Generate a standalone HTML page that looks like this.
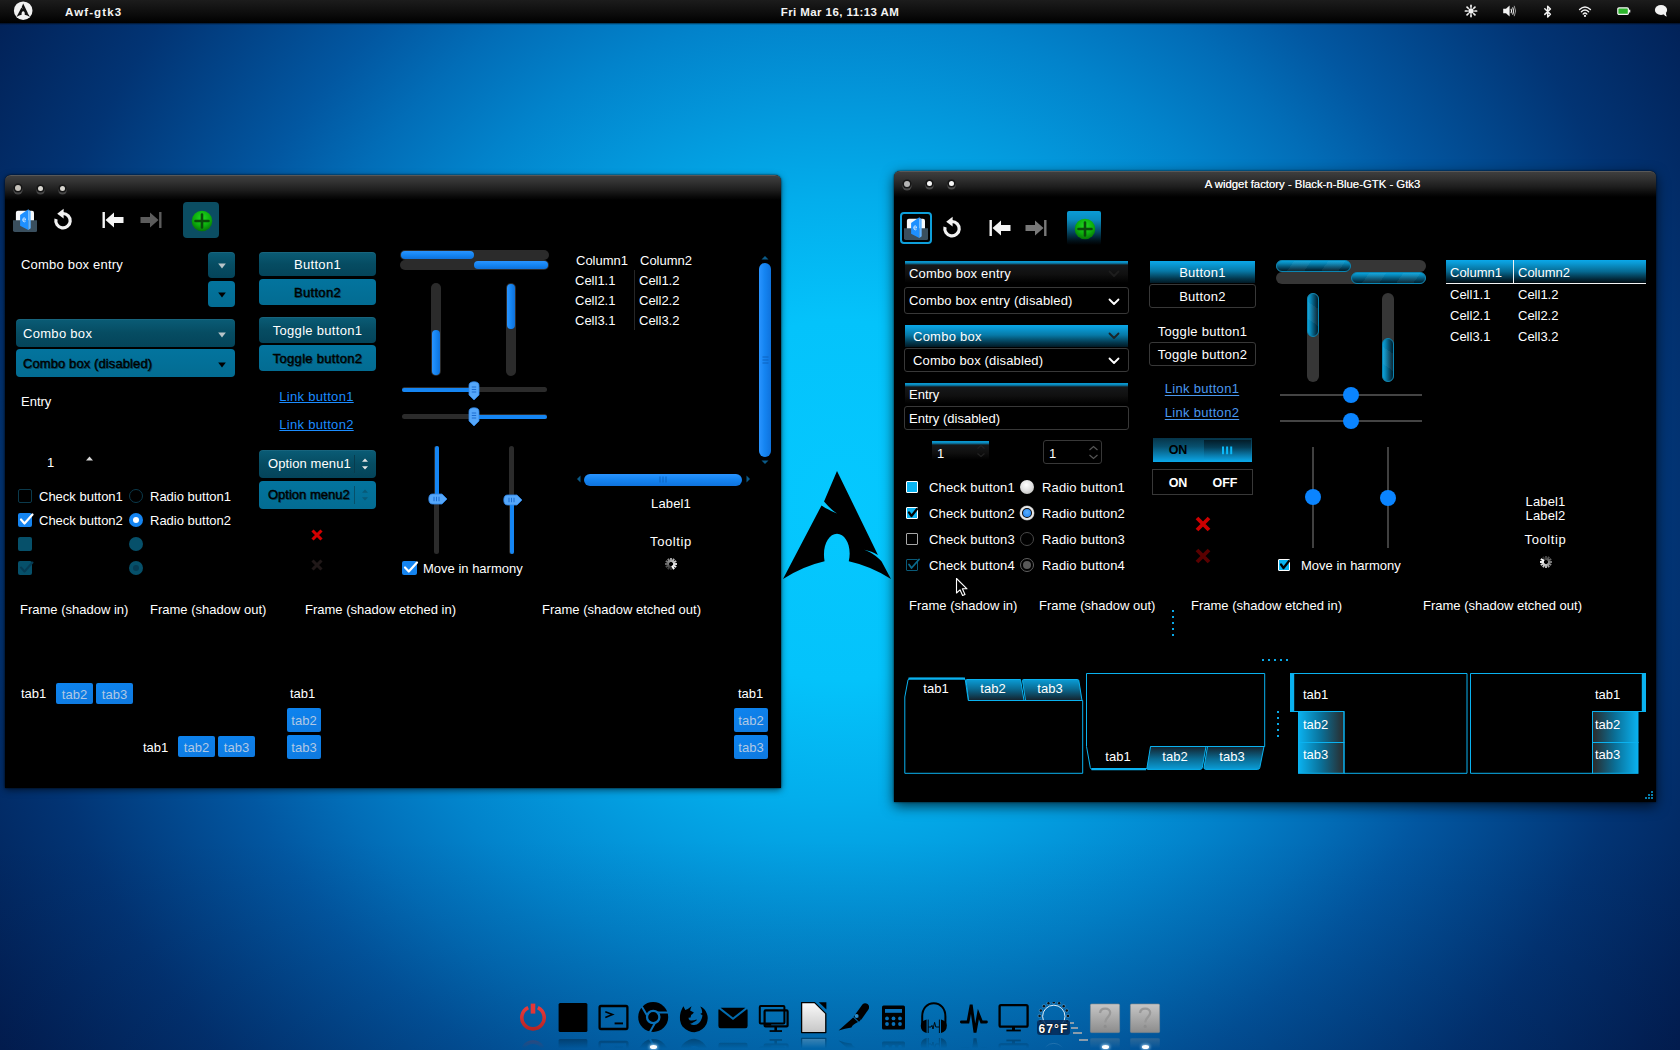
<!DOCTYPE html>
<html><head><meta charset="utf-8"><title>desktop</title>
<style>
html,body{margin:0;padding:0;}
body{width:1680px;height:1050px;overflow:hidden;position:relative;font-family:"Liberation Sans",sans-serif;
background:#0288d0;}
#bg{position:absolute;left:0;top:0;width:1680px;height:1050px;
background:linear-gradient(rgba(0,16,56,0) 80%,rgba(0,16,56,.16) 100%),radial-gradient(circle 1000px at 840px 500px,#05c8ff 0%,#04c3fb 18%,#03aeec 30%,#0397db 40%,#0283cb 49%,#026db7 58%,#0257a1 66%,#023474 83%,#021e52 100%);}
.a{position:absolute;box-sizing:border-box;}
.t{line-height:16px;height:16px;white-space:nowrap;}
</style></head><body><div id="bg"></div>

<div class="a " style="left:0px;top:0px;width:1680px;height:23px;background:linear-gradient(#1c1c1c,#0c0c0c 60%,#000);"></div>
<div class="a " style="left:0px;top:22px;width:1680px;height:3px;background:linear-gradient(rgba(0,0,0,.9),rgba(0,0,0,0));"></div>
<svg class="a" style="left:13px;top:1px;" width="20" height="20" viewBox="0 0 20 20"><circle cx="10.2" cy="9.7" r="9.3" fill="#f2f2f2"/><g transform="translate(3.5,2.5) scale(13.4)"><path d="M0.5,0 L0.38,0.283 C0.42,0.33 0.46,0.37 0.50,0.393 C0.45,0.372 0.40,0.348 0.357,0.3185 L0,1 Q0.19,0.88 0.385,0.836 C0.36,0.70 0.42,0.582 0.5,0.582 C0.58,0.582 0.64,0.70 0.609,0.836 Q0.81,0.88 1,1 L0.913,0.839 C0.87,0.79 0.81,0.75 0.753,0.73 C0.80,0.74 0.84,0.755 0.879,0.777Z" fill="#111"/></g></svg>
<div class="a t " style="left:65px;top:4px;color:#f4f4f4;font-size:11.5px;font-weight:bold;letter-spacing:1.1px;">Awf-gtk3</div>
<div class="a t " style="left:690px;width:300px;text-align:center;top:4px;color:#f4f4f4;font-size:11.5px;font-weight:bold;letter-spacing:0.42px;">Fri Mar 16, 11:13 AM</div>
<div class="a " style="left:5px;top:175px;width:776px;height:613px;background:#000;border-radius:6px 6px 0 0;box-shadow:0 2px 7px rgba(0,0,0,.55),0 0 2px rgba(0,0,0,.9);"></div>
<div class="a " style="left:5px;top:175px;width:776px;height:25px;background:linear-gradient(#3e3e3e 0%,#323232 25%,#1e1e1e 58%,#080808 88%,#000 100%);border-radius:6px 6px 0 0;border-top:1px solid #585858;"></div>
<div class="a" style="left:14.8px;top:184.8px;width:6.4px;height:6.4px;border-radius:50%;background:#c6c2ba;box-shadow:0 0 0 1.6px #161616,0 2px 0 1.6px rgba(255,255,255,.22);"></div>
<div class="a" style="left:37.5px;top:185.5px;width:5.0px;height:5.0px;border-radius:50%;background:#d8d6d0;box-shadow:0 0 0 1.6px #161616,0 2px 0 1.6px rgba(255,255,255,.22);"></div>
<div class="a" style="left:59.5px;top:185.5px;width:5.0px;height:5.0px;border-radius:50%;background:#d8d6d0;box-shadow:0 0 0 1.6px #161616,0 2px 0 1.6px rgba(255,255,255,.22);"></div>
<svg class="a" style="left:13px;top:208px;" width="24.4" height="24" viewBox="0 0 24.4 24">
<path d="M2.9 4.7 Q2.9 2.7 4.9 2.7 H19 Q21 2.7 21 4.7 V14 H2.9Z" fill="#f6f8fa"/>
<path d="M0 12.2 H24.3 V22.2 Q24.3 23.9 22.6 23.9 H1.7 Q0 23.9 0 22.2Z" fill="#3a4f5e"/>
<path d="M7.1 7 L15.3 1.3 V22 L7.1 17.7Z" fill="#1e90ff"/>
<path d="M15.3 1.3 L17.7 3.4 V20.3 L15.3 22Z" fill="#62b4ff"/>
<path d="M9.8 11.9 H12.6 Q12.4 9.8 11.1 9.8 Q9.7 9.9 9.8 11.9 Q9.9 13.8 11.3 13.8 Q12 13.8 12.5 13.4" stroke="#d8ecff" stroke-width="0.9" fill="none"/>
</svg>
<svg class="a" style="left:52px;top:208px;" width="22" height="24" viewBox="0 0 22 24">
<path d="M11 5.5 A7.2 7.2 0 1 1 4 11" fill="none" stroke="#f2f2f2" stroke-width="3.2"/>
<path d="M11.6 0.8 L11.6 10.6 L5.2 5.7Z" fill="#f2f2f2"/>
</svg>
<svg class="a" style="left:101px;top:211px;" width="24" height="18" viewBox="0 0 24 18">
<rect x="1.5" y="1" width="2.4" height="16" fill="#f4f4f4"/>
<path d="M4.5 9 L13 1.5 V6 H22.5 V12 H13 V16.5Z" fill="#f4f4f4"/>
</svg>
<svg class="a" style="left:139px;top:211px;" width="24" height="18" viewBox="0 0 24 18">
<rect x="20.1" y="1" width="2.4" height="16" fill="#5c5c5c"/>
<path d="M19.5 9 L11 1.5 V6 H1.5 V12 H11 V16.5Z" fill="#5c5c5c"/>
</svg>
<div class="a " style="left:183px;top:202px;width:36px;height:36px;background:#0b4d62;border-radius:4px;"></div>
<svg class="a" style="left:190.6px;top:209.6px;" width="22" height="22" viewBox="0 0 22 22">
<defs><radialGradient id="gp201" cx="50%" cy="35%" r="65%"><stop offset="0" stop-color="#22d822"/><stop offset="0.6" stop-color="#0cae0c"/><stop offset="1" stop-color="#067406"/></radialGradient></defs>
<circle cx="11" cy="11" r="10.3" fill="url(#gp201)"/>
<path d="M11 4.5 V17.5 M4.5 11 H17.5" stroke="#0a4a0a" stroke-width="2.6" stroke-linecap="round"/>
</svg>
<div class="a t " style="left:21px;top:257px;color:#fff;font-size:13px;letter-spacing:.2px;">Combo box entry</div>
<div class="a " style="left:208px;top:251.5px;width:27px;height:26.0px;background:linear-gradient(#0a5c76,#064c62 50%,#04445a);border-radius:4px;box-shadow:inset 0 1px 0 rgba(255,255,255,.06),0 1px 1px rgba(0,0,0,.5);"></div>
<svg class="a" style="left:217.5px;top:262.5px;" width="8" height="6" viewBox="0 0 8 6"><path d="M0.2 0.6 H7.8 L4 5.6Z" fill="#b8c4c8"/></svg>
<div class="a " style="left:208px;top:280.5px;width:27px;height:26.100000000000023px;background:linear-gradient(#03749e,#036c92);border-radius:4px;"></div>
<svg class="a" style="left:217.5px;top:292px;" width="8" height="6" viewBox="0 0 8 6"><path d="M0.2 0.6 H7.8 L4 5.6Z" fill="#000"/></svg>
<div class="a " style="left:16px;top:319.4px;width:219px;height:27.30000000000001px;background:linear-gradient(#0a5c76,#064c62 50%,#04445a);border-radius:4px;box-shadow:inset 0 1px 0 rgba(255,255,255,.06),0 1px 1px rgba(0,0,0,.5);"></div>
<div class="a t " style="left:23px;top:326px;color:#fff;font-size:13px;letter-spacing:.3px;">Combo box</div>
<svg class="a" style="left:218px;top:331.5px;" width="8" height="6" viewBox="0 0 8 6"><path d="M0.2 0.6 H7.8 L4 5.6Z" fill="#b8c4c8"/></svg>
<div class="a " style="left:16px;top:349.4px;width:219px;height:27.30000000000001px;background:linear-gradient(#03749e,#036c92);border-radius:4px;"></div>
<div class="a t " style="left:23px;top:356px;color:#000;font-size:13px;-webkit-text-stroke:.4px #000;text-shadow:1px 1px 0 #04485e;letter-spacing:.3px;letter-spacing:.1px;">Combo box (disabled)</div>
<svg class="a" style="left:218px;top:361.5px;" width="8" height="6" viewBox="0 0 8 6"><path d="M0.2 0.6 H7.8 L4 5.6Z" fill="#000"/></svg>
<div class="a t " style="left:21px;top:394px;color:#fff;font-size:13px;">Entry</div>
<div class="a t " style="left:47px;top:455px;color:#fff;font-size:13px;">1</div>
<svg class="a" style="left:86px;top:456px;" width="7" height="5" viewBox="0 0 7 5"><path d="M0 4.5 L3.5 0.5 L7 4.5Z" fill="#d8d8d8"/></svg>
<div class="a " style="left:259px;top:252px;width:117px;height:24px;background:linear-gradient(#0a5c76,#064c62 50%,#04445a);border-radius:4px;box-shadow:inset 0 1px 0 rgba(255,255,255,.06),0 1px 1px rgba(0,0,0,.5);"></div>
<div class="a t " style="left:167.5px;width:300px;text-align:center;top:257px;color:#fff;font-size:13px;letter-spacing:.3px;">Button1</div>
<div class="a " style="left:259px;top:279px;width:117px;height:26px;background:linear-gradient(#03749e,#036c92);border-radius:4px;"></div>
<div class="a t " style="left:167.5px;width:300px;text-align:center;top:285px;color:#000;font-size:13px;-webkit-text-stroke:.4px #000;text-shadow:1px 1px 0 #04485e;letter-spacing:.3px;">Button2</div>
<div class="a " style="left:259px;top:317px;width:117px;height:26px;background:linear-gradient(#0a5c76,#064c62 50%,#04445a);border-radius:4px;box-shadow:inset 0 1px 0 rgba(255,255,255,.06),0 1px 1px rgba(0,0,0,.5);"></div>
<div class="a t " style="left:167.5px;width:300px;text-align:center;top:323px;color:#fff;font-size:13px;letter-spacing:.3px;">Toggle button1</div>
<div class="a " style="left:259px;top:345px;width:117px;height:26px;background:linear-gradient(#03749e,#036c92);border-radius:4px;"></div>
<div class="a t " style="left:167.5px;width:300px;text-align:center;top:351px;color:#000;font-size:13px;-webkit-text-stroke:.4px #000;text-shadow:1px 1px 0 #04485e;letter-spacing:.3px;">Toggle button2</div>
<div class="a t " style="left:166.5px;width:300px;text-align:center;top:389px;color:#1b8cff;font-size:13px;text-decoration:underline;text-underline-offset:0.6px;letter-spacing:.3px;">Link button1</div>
<div class="a t " style="left:166.5px;width:300px;text-align:center;top:417px;color:#1b8cff;font-size:13px;text-decoration:underline;text-underline-offset:0.6px;letter-spacing:.3px;">Link button2</div>
<div class="a " style="left:259px;top:450px;width:117px;height:28px;background:linear-gradient(#0a5c76,#064c62 50%,#04445a);border-radius:4px;box-shadow:inset 0 1px 0 rgba(255,255,255,.06),0 1px 1px rgba(0,0,0,.5);"></div>
<div class="a t " style="left:268px;top:456px;color:#fff;font-size:13px;letter-spacing:.1px;">Option menu1</div>
<div class="a " style="left:354px;top:455px;width:1px;height:18px;background:#083c4e;"></div>
<svg class="a" style="left:360.5px;top:457px;" width="8" height="14" viewBox="0 0 8 14"><path d="M1 4.8 L4 1.4 L7 4.8Z M1 9.2 L4 12.6 L7 9.2Z" fill="#e4e4e4"/></svg>
<div class="a " style="left:259px;top:481px;width:117px;height:28px;background:linear-gradient(#03749e,#036c92);border-radius:4px;"></div>
<div class="a t " style="left:268px;top:487px;color:#000;font-size:13px;-webkit-text-stroke:.4px #000;text-shadow:1px 1px 0 #04485e;letter-spacing:.3px;letter-spacing:0;">Option menu2</div>
<div class="a " style="left:354px;top:486px;width:1px;height:18px;background:#07506a;"></div>
<svg class="a" style="left:360.5px;top:488px;" width="8" height="14" viewBox="0 0 8 14"><path d="M1 4.8 L4 1.4 L7 4.8Z M1 9.2 L4 12.6 L7 9.2Z" fill="#085a78"/></svg>
<div class="a " style="left:18px;top:489px;width:14px;height:14px;border:1.5px solid #0b3a4c;border-radius:2px;background:#000;"></div>
<div class="a t " style="left:39px;top:489px;color:#fff;font-size:13px;">Check button1</div>
<div class="a" style="left:129px;top:489px;width:14px;height:14px;border-radius:50%;border:1.5px solid #0b3a4c;background:#000;"></div>
<div class="a t " style="left:150px;top:489px;color:#fff;font-size:13px;">Radio button1</div>
<div class="a " style="left:18px;top:513px;width:14px;height:14px;background:#1584f0;border-radius:2px;"></div>
<svg class="a" style="left:18px;top:511px;" width="16" height="16" viewBox="0 0 16 16"><path d="M3 8.5 L6.5 12.5 L14.5 3.5" fill="none" stroke="#fff" stroke-width="2.2" stroke-linecap="round" stroke-linejoin="round"/></svg>
<div class="a t " style="left:39px;top:513px;color:#fff;font-size:13px;">Check button2</div>
<div class="a" style="left:129px;top:513px;width:14px;height:14px;border-radius:50%;background:#1584f0;"></div>
<div class="a" style="left:133px;top:517px;width:6px;height:6px;border-radius:50%;background:#fff;"></div>
<div class="a t " style="left:150px;top:513px;color:#fff;font-size:13px;">Radio button2</div>
<div class="a " style="left:18px;top:537px;width:14px;height:14px;background:#06506a;border-radius:2px;"></div>
<div class="a" style="left:129px;top:537px;width:14px;height:14px;border-radius:50%;background:#06506a;"></div>
<div class="a " style="left:18px;top:561px;width:14px;height:14px;background:#06506a;border-radius:2px;"></div>
<svg class="a" style="left:18px;top:559px;" width="16" height="16" viewBox="0 0 16 16"><path d="M3 8.5 L6.5 12.5 L14.5 3.5" fill="none" stroke="#063c54" stroke-width="2" stroke-linecap="round" stroke-linejoin="round"/></svg>
<div class="a" style="left:129px;top:561px;width:14px;height:14px;border-radius:50%;background:#06506a;"></div>
<div class="a" style="left:133px;top:565px;width:6px;height:6px;border-radius:50%;background:#063c54;"></div>
<svg class="a" style="left:311.2px;top:529.2px;" width="12" height="12" viewBox="0 0 12 12"><path d="M1.5 1.5 L10.5 10.5 M10.5 1.5 L1.5 10.5" stroke="#d40000" stroke-width="3.1" stroke-linecap="butt"/></svg>
<svg class="a" style="left:311.2px;top:559px;" width="12" height="12" viewBox="0 0 12 12"><path d="M1.5 1.5 L10.5 10.5 M10.5 1.5 L1.5 10.5" stroke="#201818" stroke-width="3.1" stroke-linecap="butt"/></svg>
<div class="a t " style="left:20px;top:602px;color:#fff;font-size:13px;">Frame (shadow in)</div>
<div class="a t " style="left:150px;top:602px;color:#fff;font-size:13px;">Frame (shadow out)</div>
<div class="a t " style="left:305px;top:602px;color:#fff;font-size:13px;">Frame (shadow etched in)</div>
<div class="a t " style="left:542px;top:602px;color:#fff;font-size:13px;">Frame (shadow etched out)</div>
<div class="a " style="left:400px;top:250px;width:149px;height:10px;background:#2b2b2b;border-radius:5px;"></div>
<div class="a " style="left:401px;top:251px;width:73px;height:8px;background:linear-gradient(#2a94ff,#1585f2 50%,#0f70d8);border-radius:4px;"></div>
<div class="a " style="left:400px;top:260px;width:149px;height:10px;background:#2b2b2b;border-radius:5px;"></div>
<div class="a " style="left:474px;top:261px;width:74px;height:8px;background:linear-gradient(#2a94ff,#1585f2 50%,#0f70d8);border-radius:4px;"></div>
<div class="a " style="left:431px;top:283px;width:10px;height:93px;background:#2b2b2b;border-radius:5px;"></div>
<div class="a " style="left:432px;top:330px;width:8px;height:45px;background:linear-gradient(90deg,#2a94ff,#1585f2 50%,#0f70d8);border-radius:4px;"></div>
<div class="a " style="left:506px;top:283px;width:10px;height:93px;background:#2b2b2b;border-radius:5px;"></div>
<div class="a " style="left:507px;top:284px;width:8px;height:45px;background:linear-gradient(90deg,#2a94ff,#1585f2 50%,#0f70d8);border-radius:4px;"></div>
<div class="a " style="left:402px;top:387px;width:145px;height:5px;background:#2b2b2b;border-radius:3px;"></div>
<div class="a " style="left:402px;top:387.5px;width:72px;height:4.0px;background:#1585f2;border-radius:2px;"></div>
<svg class="a" style="left:468px;top:380.5px;" width="12" height="20" viewBox="0 0 12 20"><path d="M1 4.5 Q1 0.8 6 0.8 Q11 0.8 11 4.5 V14 L6 19 L1 14Z" fill="#55a7fa" stroke="#2e86e8" stroke-width="0.8"/>
<path d="M3.8 6 H8.2 M3.8 8.5 H8.2 M3.8 11 H8.2" stroke="#1766cc" stroke-width="0.9"/></svg>
<div class="a " style="left:402px;top:414px;width:145px;height:5px;background:#2b2b2b;border-radius:3px;"></div>
<div class="a " style="left:474px;top:414.5px;width:73px;height:4.0px;background:#1585f2;border-radius:2px;"></div>
<svg class="a" style="left:468px;top:407.0px;" width="12" height="20" viewBox="0 0 12 20"><path d="M1 4.5 Q1 0.8 6 0.8 Q11 0.8 11 4.5 V14 L6 19 L1 14Z" fill="#55a7fa" stroke="#2e86e8" stroke-width="0.8"/>
<path d="M3.8 6 H8.2 M3.8 8.5 H8.2 M3.8 11 H8.2" stroke="#1766cc" stroke-width="0.9"/></svg>
<div class="a " style="left:434px;top:446px;width:5px;height:108px;background:#2b2b2b;border-radius:3px;"></div>
<div class="a " style="left:434.5px;top:446px;width:4.0px;height:53px;background:#1585f2;border-radius:2px;"></div>
<svg class="a" style="left:427.5px;top:492.5px;" width="20" height="12" viewBox="0 0 20 12"><path d="M4.5 1 Q0.8 1 0.8 6 Q0.8 11 4.5 11 H14 L19 6 L14 1Z" fill="#55a7fa" stroke="#2e86e8" stroke-width="0.8"/>
<path d="M6 3.8 V8.2 M8.5 3.8 V8.2 M11 3.8 V8.2" stroke="#1766cc" stroke-width="0.9"/></svg>
<div class="a " style="left:509px;top:446px;width:5px;height:108px;background:#2b2b2b;border-radius:3px;"></div>
<div class="a " style="left:509.5px;top:500px;width:4.0px;height:54px;background:#1585f2;border-radius:2px;"></div>
<svg class="a" style="left:502.5px;top:493.5px;" width="20" height="12" viewBox="0 0 20 12"><path d="M4.5 1 Q0.8 1 0.8 6 Q0.8 11 4.5 11 H14 L19 6 L14 1Z" fill="#55a7fa" stroke="#2e86e8" stroke-width="0.8"/>
<path d="M6 3.8 V8.2 M8.5 3.8 V8.2 M11 3.8 V8.2" stroke="#1766cc" stroke-width="0.9"/></svg>
<div class="a " style="left:402px;top:561px;width:15px;height:14px;background:#1584f0;border-radius:2px;"></div>
<svg class="a" style="left:402px;top:559px;" width="17" height="16" viewBox="0 0 17 16"><path d="M3 8.5 L6.8 12.5 L15 3.5" fill="none" stroke="#fff" stroke-width="2.2" stroke-linecap="round" stroke-linejoin="round"/></svg>
<div class="a t " style="left:423px;top:561px;color:#fff;font-size:13px;">Move in harmony</div>
<div class="a t " style="left:576px;top:253px;color:#fff;font-size:13px;">Column1</div>
<div class="a t " style="left:640px;top:253px;color:#fff;font-size:13px;">Column2</div>
<div class="a t " style="left:575px;top:272.5px;color:#fff;font-size:13px;">Cell1.1</div>
<div class="a t " style="left:639px;top:272.5px;color:#fff;font-size:13px;">Cell1.2</div>
<div class="a t " style="left:575px;top:292.5px;color:#fff;font-size:13px;">Cell2.1</div>
<div class="a t " style="left:639px;top:292.5px;color:#fff;font-size:13px;">Cell2.2</div>
<div class="a t " style="left:575px;top:312.5px;color:#fff;font-size:13px;">Cell3.1</div>
<div class="a t " style="left:639px;top:312.5px;color:#fff;font-size:13px;">Cell3.2</div>
<div class="a " style="left:634px;top:270px;width:1px;height:60px;background:#262626;"></div>
<div class="a " style="left:759px;top:263px;width:12px;height:194px;background:linear-gradient(90deg,#2a94ff,#1585f2 45%,#0f72dc);border-radius:6px;"></div>
<svg class="a" style="left:762px;top:355px;" width="7" height="10" viewBox="0 0 7 10"><path d="M0.5 2 H6.5 M0.5 5 H6.5 M0.5 8 H6.5" stroke="#0a5ab4" stroke-width="0.8"/></svg>
<svg class="a" style="left:761px;top:255px;" width="8" height="5" viewBox="0 0 8 5"><path d="M0.5 4.5 L4 1 L7.5 4.5Z" fill="#0a5a88"/></svg>
<svg class="a" style="left:761px;top:460px;" width="8" height="5" viewBox="0 0 8 5"><path d="M0.5 0.5 L4 4 L7.5 0.5Z" fill="#0a5a88"/></svg>
<div class="a " style="left:584px;top:474px;width:158px;height:12px;background:linear-gradient(#2a94ff,#1585f2 45%,#0f72dc);border-radius:6px;"></div>
<svg class="a" style="left:658px;top:476px;" width="10" height="7" viewBox="0 0 10 7"><path d="M2 0.5 V6.5 M5 0.5 V6.5 M8 0.5 V6.5" stroke="#0a5ab4" stroke-width="0.8"/></svg>
<svg class="a" style="left:576px;top:475px;" width="5" height="8" viewBox="0 0 5 8"><path d="M4.5 0.5 L1 4 L4.5 7.5Z" fill="#0a5a88"/></svg>
<svg class="a" style="left:746px;top:475px;" width="5" height="8" viewBox="0 0 5 8"><path d="M0.5 0.5 L4 4 L0.5 7.5Z" fill="#0a5a88"/></svg>
<div class="a t " style="left:521px;width:300px;text-align:center;top:496px;color:#fff;font-size:13px;letter-spacing:.15px;">Label1</div>
<div class="a t " style="left:521px;width:300px;text-align:center;top:534px;color:#fff;font-size:13px;letter-spacing:.6px;">Tooltip</div>
<svg class="a" style="left:664px;top:557px;" width="14" height="14" viewBox="0 0 14 14"><line x1="7.00" y1="4.84" x2="7.00" y2="1.00" stroke="#fff" stroke-opacity="0.62" stroke-width="2" stroke-linecap="butt"/><line x1="8.08" y1="5.13" x2="10.00" y2="1.80" stroke="#fff" stroke-opacity="0.70" stroke-width="2" stroke-linecap="butt"/><line x1="8.87" y1="5.92" x2="12.20" y2="4.00" stroke="#fff" stroke-opacity="0.78" stroke-width="2" stroke-linecap="butt"/><line x1="9.16" y1="7.00" x2="13.00" y2="7.00" stroke="#fff" stroke-opacity="0.85" stroke-width="2" stroke-linecap="butt"/><line x1="8.87" y1="8.08" x2="12.20" y2="10.00" stroke="#fff" stroke-opacity="0.93" stroke-width="2" stroke-linecap="butt"/><line x1="8.08" y1="8.87" x2="10.00" y2="12.20" stroke="#fff" stroke-opacity="1.00" stroke-width="2" stroke-linecap="butt"/><line x1="7.00" y1="9.16" x2="7.00" y2="13.00" stroke="#fff" stroke-opacity="0.18" stroke-width="2" stroke-linecap="butt"/><line x1="5.92" y1="8.87" x2="4.00" y2="12.20" stroke="#fff" stroke-opacity="0.25" stroke-width="2" stroke-linecap="butt"/><line x1="5.13" y1="8.08" x2="1.80" y2="10.00" stroke="#fff" stroke-opacity="0.32" stroke-width="2" stroke-linecap="butt"/><line x1="4.84" y1="7.00" x2="1.00" y2="7.00" stroke="#fff" stroke-opacity="0.40" stroke-width="2" stroke-linecap="butt"/><line x1="5.13" y1="5.92" x2="1.80" y2="4.00" stroke="#fff" stroke-opacity="0.47" stroke-width="2" stroke-linecap="butt"/><line x1="5.92" y1="5.13" x2="4.00" y2="1.80" stroke="#fff" stroke-opacity="0.55" stroke-width="2" stroke-linecap="butt"/></svg>
<div class="a t " style="left:21px;top:686px;color:#fff;font-size:13px;">tab1</div>
<div class="a " style="left:56px;top:683px;width:37px;height:21px;background:linear-gradient(160deg,#0d84f0,#0f79de);border-radius:2px;"></div>
<div class="a t " style="left:-75.5px;width:300px;text-align:center;top:686.5px;color:#b0c8e4;font-size:13px;">tab2</div>
<div class="a " style="left:96px;top:683px;width:37px;height:21px;background:linear-gradient(160deg,#0d84f0,#0f79de);border-radius:2px;"></div>
<div class="a t " style="left:-35.5px;width:300px;text-align:center;top:686.5px;color:#b0c8e4;font-size:13px;">tab3</div>
<div class="a t " style="left:143px;top:740px;color:#fff;font-size:13px;">tab1</div>
<div class="a " style="left:178px;top:736px;width:37px;height:21px;background:linear-gradient(160deg,#0d84f0,#0f79de);border-radius:2px;"></div>
<div class="a t " style="left:46.5px;width:300px;text-align:center;top:739.5px;color:#b0c8e4;font-size:13px;">tab2</div>
<div class="a " style="left:218px;top:736px;width:37px;height:21px;background:linear-gradient(160deg,#0d84f0,#0f79de);border-radius:2px;"></div>
<div class="a t " style="left:86.5px;width:300px;text-align:center;top:739.5px;color:#b0c8e4;font-size:13px;">tab3</div>
<div class="a t " style="left:290px;top:686px;color:#fff;font-size:13px;">tab1</div>
<div class="a " style="left:287px;top:708px;width:34px;height:24px;background:linear-gradient(160deg,#0d84f0,#0f79de);border-radius:2px;"></div>
<div class="a t " style="left:154.0px;width:300px;text-align:center;top:713.0px;color:#b0c8e4;font-size:13px;">tab2</div>
<div class="a " style="left:287px;top:735px;width:34px;height:24px;background:linear-gradient(160deg,#0d84f0,#0f79de);border-radius:2px;"></div>
<div class="a t " style="left:154.0px;width:300px;text-align:center;top:740.0px;color:#b0c8e4;font-size:13px;">tab3</div>
<div class="a t " style="left:738px;top:686px;color:#fff;font-size:13px;">tab1</div>
<div class="a " style="left:734px;top:708px;width:34px;height:24px;background:linear-gradient(160deg,#0d84f0,#0f79de);border-radius:2px;"></div>
<div class="a t " style="left:601.0px;width:300px;text-align:center;top:713.0px;color:#b0c8e4;font-size:13px;">tab2</div>
<div class="a " style="left:734px;top:735px;width:34px;height:24px;background:linear-gradient(160deg,#0d84f0,#0f79de);border-radius:2px;"></div>
<div class="a t " style="left:601.0px;width:300px;text-align:center;top:740.0px;color:#b0c8e4;font-size:13px;">tab3</div>
<div class="a " style="left:894px;top:171px;width:762px;height:631px;background:#000;border-radius:6px 6px 0 0;box-shadow:0 4px 13px rgba(0,0,0,.7),0 0 2px rgba(0,0,0,.9);"></div>
<div class="a " style="left:894px;top:171px;width:762px;height:26px;background:linear-gradient(#3e3e3e 0%,#323232 25%,#1e1e1e 58%,#080808 88%,#000 100%);border-radius:6px 6px 0 0;border-top:1px solid #585858;"></div>
<div class="a" style="left:903.8px;top:180.60000000000002px;width:6.4px;height:6.4px;border-radius:50%;background:#b4b4b4;box-shadow:0 0 0 1.6px #161616,0 2px 0 1.6px rgba(255,255,255,.22);"></div>
<div class="a" style="left:926.5px;top:181.3px;width:5.0px;height:5.0px;border-radius:50%;background:#f6f6f6;box-shadow:0 0 0 1.6px #161616,0 2px 0 1.6px rgba(255,255,255,.22);"></div>
<div class="a" style="left:948.5px;top:181.3px;width:5.0px;height:5.0px;border-radius:50%;background:#f6f6f6;box-shadow:0 0 0 1.6px #161616,0 2px 0 1.6px rgba(255,255,255,.22);"></div>
<div class="a t " style="left:1162.5px;width:300px;text-align:center;top:176px;color:#f0f0f0;font-size:11.35px;text-shadow:0 0 .6px #fff;">A widget factory - Black-n-Blue-GTK - Gtk3</div>
<div class="a " style="left:900px;top:212px;width:32px;height:32px;border:2px solid #0e9fda;border-radius:4px;background:#000;"></div>
<svg class="a" style="left:904px;top:216px;" width="24.4" height="24" viewBox="0 0 24.4 24">
<path d="M2.9 4.7 Q2.9 2.7 4.9 2.7 H19 Q21 2.7 21 4.7 V14 H2.9Z" fill="#f6f8fa"/>
<path d="M0 12.2 H24.3 V22.2 Q24.3 23.9 22.6 23.9 H1.7 Q0 23.9 0 22.2Z" fill="#3a4f5e"/>
<path d="M7.1 7 L15.3 1.3 V22 L7.1 17.7Z" fill="#1e90ff"/>
<path d="M15.3 1.3 L17.7 3.4 V20.3 L15.3 22Z" fill="#62b4ff"/>
<path d="M9.8 11.9 H12.6 Q12.4 9.8 11.1 9.8 Q9.7 9.9 9.8 11.9 Q9.9 13.8 11.3 13.8 Q12 13.8 12.5 13.4" stroke="#d8ecff" stroke-width="0.9" fill="none"/>
</svg>
<svg class="a" style="left:940.7px;top:216px;" width="22" height="24" viewBox="0 0 22 24">
<path d="M11 5.5 A7.2 7.2 0 1 1 4 11" fill="none" stroke="#f2f2f2" stroke-width="3.2"/>
<path d="M11.6 0.8 L11.6 10.6 L5.2 5.7Z" fill="#f2f2f2"/>
</svg>
<svg class="a" style="left:988px;top:219px;" width="24" height="18" viewBox="0 0 24 18">
<rect x="1.5" y="1" width="2.4" height="16" fill="#f4f4f4"/>
<path d="M4.5 9 L13 1.5 V6 H22.5 V12 H13 V16.5Z" fill="#f4f4f4"/>
</svg>
<svg class="a" style="left:1024px;top:219px;" width="24" height="18" viewBox="0 0 24 18">
<rect x="20.1" y="1" width="2.4" height="16" fill="#787878"/>
<path d="M19.5 9 L11 1.5 V6 H1.5 V12 H11 V16.5Z" fill="#787878"/>
</svg>
<div class="a " style="left:1067px;top:211px;width:34px;height:34px;background:linear-gradient(#0a9cd6 0%,#0a8cc0 25%,#054a68 60%,#011018 88%,#000 100%);border-radius:2px;"></div>
<svg class="a" style="left:1073.8px;top:217.6px;" width="22" height="22" viewBox="0 0 22 22">
<defs><radialGradient id="gp1084" cx="50%" cy="35%" r="65%"><stop offset="0" stop-color="#22d822"/><stop offset="0.6" stop-color="#0cae0c"/><stop offset="1" stop-color="#067406"/></radialGradient></defs>
<circle cx="11" cy="11" r="10.3" fill="url(#gp1084)"/>
<path d="M11 4.5 V17.5 M4.5 11 H17.5" stroke="#0a4a0a" stroke-width="2.6" stroke-linecap="round"/>
</svg>
<div class="a " style="left:905px;top:261px;width:223px;height:22px;background:linear-gradient(#0a9cd6 0px,#0a86b8 2px,#16181a 4px,#101010 60%,#000 100%);"></div>
<div class="a t " style="left:909px;top:266px;color:#fff;font-size:13px;letter-spacing:.2px;">Combo box entry</div>
<svg class="a" style="left:1108px;top:270px;" width="12" height="8" viewBox="0 0 12 8"><path d="M1.5 1.5 L6 6 L10.5 1.5" fill="none" stroke="#1e1e1e" stroke-width="1.8" stroke-linecap="round" stroke-linejoin="round"/></svg>
<div class="a " style="left:904px;top:287px;width:225px;height:27px;border:1px solid #383838;border-radius:3px;background:#000;"></div>
<div class="a t " style="left:909px;top:293px;color:#fff;font-size:13px;letter-spacing:.15px;">Combo box entry (disabled)</div>
<svg class="a" style="left:1108px;top:297.5px;" width="12" height="8" viewBox="0 0 12 8"><path d="M1.5 1.5 L6 6 L10.5 1.5" fill="none" stroke="#fff" stroke-width="1.8" stroke-linecap="round" stroke-linejoin="round"/></svg>
<div class="a " style="left:905px;top:325px;width:223px;height:22px;background:linear-gradient(#0aa8ea 0%,#0a9cd8 12%,#077aa8 45%,#03384e 80%,#001824 100%);"></div>
<div class="a t " style="left:913px;top:329px;color:#fff;font-size:13px;letter-spacing:.25px;">Combo box</div>
<svg class="a" style="left:1108px;top:332px;" width="12" height="8" viewBox="0 0 12 8"><path d="M1.5 1.5 L6 6 L10.5 1.5" fill="none" stroke="#1c2428" stroke-width="1.8" stroke-linecap="round" stroke-linejoin="round"/></svg>
<div class="a " style="left:904px;top:348px;width:225px;height:24px;border:1px solid #383838;border-radius:3px;background:#000;"></div>
<div class="a t " style="left:913px;top:353px;color:#fff;font-size:13px;letter-spacing:.15px;">Combo box (disabled)</div>
<svg class="a" style="left:1108px;top:357px;" width="12" height="8" viewBox="0 0 12 8"><path d="M1.5 1.5 L6 6 L10.5 1.5" fill="none" stroke="#fff" stroke-width="1.8" stroke-linecap="round" stroke-linejoin="round"/></svg>
<div class="a " style="left:905px;top:383px;width:223px;height:21px;background:linear-gradient(#0a9cd6 0px,#0a86b8 2px,#16181a 4px,#101010 60%,#000 100%);"></div>
<div class="a t " style="left:909px;top:387px;color:#fff;font-size:13px;">Entry</div>
<div class="a " style="left:904px;top:406px;width:225px;height:24px;border:1px solid #383838;border-radius:3px;background:#000;"></div>
<div class="a t " style="left:909px;top:411px;color:#fff;font-size:13px;">Entry (disabled)</div>
<div class="a " style="left:932px;top:441px;width:57px;height:19px;background:linear-gradient(#0a9cd6 0px,#0a86b8 2px,#16181a 4px,#101010 60%,#000 100%);"></div>
<div class="a t " style="left:937px;top:445.5px;color:#fff;font-size:13px;">1</div>
<svg class="a" style="left:976px;top:443px;" width="10" height="16" viewBox="0 0 10 16"><path d="M1.5 5.5 L5 2.5 L8.5 5.5 M1.5 10.5 L5 13.5 L8.5 10.5" fill="none" stroke="#222" stroke-width="1.2"/></svg>
<div class="a " style="left:1043px;top:440px;width:59px;height:24px;border:1px solid #383838;border-radius:3px;background:#000;"></div>
<div class="a t " style="left:1049px;top:445.5px;color:#fff;font-size:13px;">1</div>
<svg class="a" style="left:1088px;top:444px;" width="11" height="17" viewBox="0 0 11 17"><path d="M1.5 6 L5.5 2.5 L9.5 6 M1.5 11 L5.5 14.5 L9.5 11" fill="none" stroke="#555" stroke-width="1.2"/></svg>
<div class="a " style="left:1150px;top:261px;width:105px;height:22px;background:linear-gradient(#0aa8ea 0%,#0a9cd8 12%,#077aa8 45%,#03384e 80%,#001824 100%);"></div>
<div class="a t " style="left:1052.5px;width:300px;text-align:center;top:265px;color:#fff;font-size:13px;letter-spacing:.25px;">Button1</div>
<div class="a " style="left:1149px;top:284px;width:107px;height:24px;border:1px solid #383838;border-radius:3px;background:#000;"></div>
<div class="a t " style="left:1052.5px;width:300px;text-align:center;top:289px;color:#fff;font-size:13px;letter-spacing:.25px;">Button2</div>
<div class="a t " style="left:1052.5px;width:300px;text-align:center;top:324px;color:#fff;font-size:13px;letter-spacing:.3px;">Toggle button1</div>
<div class="a " style="left:1149px;top:342px;width:107px;height:24px;border:1px solid #383838;border-radius:3px;background:#000;"></div>
<div class="a t " style="left:1052.5px;width:300px;text-align:center;top:347px;color:#fff;font-size:13px;letter-spacing:.3px;">Toggle button2</div>
<div class="a t " style="left:1052px;width:300px;text-align:center;top:381px;color:#4a98ee;font-size:13px;text-decoration:underline;text-underline-offset:1.6px;letter-spacing:.3px;">Link button1</div>
<div class="a t " style="left:1052px;width:300px;text-align:center;top:405px;color:#4a98ee;font-size:13px;text-decoration:underline;text-underline-offset:1.6px;letter-spacing:.3px;">Link button2</div>
<div class="a " style="left:1153px;top:438px;width:99px;height:24px;background:linear-gradient(#063448 0%,#08506e 35%,#0a86ba 75%,#0aa8ea 100%);"></div>
<div class="a " style="left:1204px;top:440px;width:47px;height:21px;background:linear-gradient(#031c28 0%,#063c54 35%,#0a7eb0 75%,#0aa6e6 100%);"></div>
<div class="a t " style="left:1028px;width:300px;text-align:center;top:442.3px;color:#000;font-size:12.5px;font-weight:bold;">ON</div>
<svg class="a" style="left:1220px;top:445.5px;" width="14" height="9" viewBox="0 0 14 9"><path d="M3 0.6 V8.2 M7.1 0.6 V8.2 M11.2 0.6 V8.2" stroke="#0ab8f8" stroke-width="2"/></svg>
<div class="a " style="left:1152px;top:469px;width:101px;height:26px;border:1px solid #383838;background:#000;"></div>
<div class="a t " style="left:1028px;width:300px;text-align:center;top:474.5px;color:#fff;font-size:12.5px;font-weight:bold;">ON</div>
<div class="a t " style="left:1075px;width:300px;text-align:center;top:474.5px;color:#fff;font-size:12.5px;font-weight:bold;">OFF</div>
<div class="a " style="left:906px;top:481px;width:12px;height:12px;background:#0ab4f2;border:1px solid #fff;border-radius:1px;"></div>
<div class="a t " style="left:929px;top:480px;color:#fff;font-size:13px;letter-spacing:.15px;">Check button1</div>
<div class="a" style="left:1020px;top:480px;width:14px;height:14px;border-radius:50%;background:radial-gradient(circle at 45% 35%,#fff 0%,#e0e0e0 50%,#b0b0a8 100%);"></div>
<div class="a t " style="left:1042px;top:480px;color:#fff;font-size:13px;letter-spacing:.15px;">Radio button1</div>
<div class="a " style="left:906px;top:507px;width:12px;height:12px;background:#0ab4f2;border:1px solid #fff;border-radius:1px;"></div>
<svg class="a" style="left:906px;top:506px;" width="13" height="13" viewBox="0 0 13 13"><path d="M3 6.5 L5.5 10 L11 3" fill="none" stroke="#000" stroke-width="2.2" stroke-linecap="round" stroke-linejoin="round"/></svg>
<div class="a t " style="left:929px;top:506px;color:#fff;font-size:13px;letter-spacing:.15px;">Check button2</div>
<div class="a" style="left:1020px;top:506px;width:14px;height:14px;border-radius:50%;background:#050505;border:2px solid #e8e8e8;box-shadow:0 0 0 .5px #888;"></div>
<div class="a" style="left:1023px;top:509px;width:8px;height:8px;border-radius:50%;background:radial-gradient(circle at 50% 40%,#5ab0ff,#1a7cf0);"></div>
<div class="a t " style="left:1042px;top:506px;color:#fff;font-size:13px;letter-spacing:.15px;">Radio button2</div>
<div class="a " style="left:906px;top:533px;width:12px;height:12px;background:#000;border:1px solid #a8a8a8;border-radius:1px;"></div>
<div class="a t " style="left:929px;top:532px;color:#fff;font-size:13px;letter-spacing:.15px;">Check button3</div>
<div class="a" style="left:1020px;top:532px;width:14px;height:14px;border-radius:50%;background:#000;border:1.2px solid #484848;"></div>
<div class="a t " style="left:1042px;top:532px;color:#fff;font-size:13px;letter-spacing:.15px;">Radio button3</div>
<div class="a " style="left:906px;top:559px;width:12px;height:12px;background:#000;border:1px solid #0a5a78;border-radius:1px;"></div>
<svg class="a" style="left:906px;top:557px;" width="15" height="14" viewBox="0 0 15 14"><path d="M3 7.5 L5.5 11 L13 2.5" fill="none" stroke="#0a6a8c" stroke-width="1.8" stroke-linecap="round" stroke-linejoin="round"/></svg>
<div class="a t " style="left:929px;top:558px;color:#fff;font-size:13px;letter-spacing:.15px;">Check button4</div>
<div class="a" style="left:1020px;top:558px;width:14px;height:14px;border-radius:50%;background:#000;border:1.5px solid #606060;"></div>
<div class="a" style="left:1023px;top:561px;width:8px;height:8px;border-radius:50%;background:#585858;"></div>
<div class="a t " style="left:1042px;top:558px;color:#fff;font-size:13px;letter-spacing:.15px;">Radio button4</div>
<svg class="a" style="left:1194.5px;top:516.3px;" width="16" height="16" viewBox="0 0 16 16"><path d="M2 2 L14 14 M14 2 L2 14" stroke="#cc0000" stroke-width="3.8" stroke-linecap="butt"/></svg>
<svg class="a" style="left:1194.5px;top:548.3px;" width="16" height="16" viewBox="0 0 16 16"><path d="M2 2 L14 14 M14 2 L2 14" stroke="#5a0000" stroke-width="3.8" stroke-linecap="butt"/></svg>
<svg class="a" style="left:955px;top:577px;" width="14" height="20" viewBox="0 0 14 20"><path d="M1.5 1.5 V16 L5 12.8 L7.6 18.5 L10 17.4 L7.4 11.8 H12Z" fill="#000" stroke="#fff" stroke-width="1.1" stroke-linejoin="round"/></svg>
<div class="a t " style="left:909px;top:598px;color:#fff;font-size:13px;">Frame (shadow in)</div>
<div class="a t " style="left:1039px;top:598px;color:#fff;font-size:13px;">Frame (shadow out)</div>
<div class="a t " style="left:1191px;top:598px;color:#fff;font-size:13px;">Frame (shadow etched in)</div>
<div class="a t " style="left:1423px;top:598px;color:#fff;font-size:13px;">Frame (shadow etched out)</div>
<div class="a " style="left:1172.2px;top:610.2px;width:1.599999999999909px;height:1.599999999999909px;background:#0aa8e6;"></div>
<div class="a " style="left:1172.2px;top:616.2px;width:1.599999999999909px;height:1.599999999999909px;background:#0aa8e6;"></div>
<div class="a " style="left:1172.2px;top:622.2px;width:1.599999999999909px;height:1.599999999999909px;background:#0aa8e6;"></div>
<div class="a " style="left:1172.2px;top:628.2px;width:1.599999999999909px;height:1.599999999999909px;background:#0aa8e6;"></div>
<div class="a " style="left:1172.2px;top:634.2px;width:1.599999999999909px;height:1.599999999999909px;background:#0aa8e6;"></div>
<div class="a " style="left:1262.2px;top:659.2px;width:1.599999999999909px;height:1.599999999999909px;background:#0aa8e6;"></div>
<div class="a " style="left:1268.2px;top:659.2px;width:1.599999999999909px;height:1.599999999999909px;background:#0aa8e6;"></div>
<div class="a " style="left:1274.2px;top:659.2px;width:1.599999999999909px;height:1.599999999999909px;background:#0aa8e6;"></div>
<div class="a " style="left:1280.2px;top:659.2px;width:1.599999999999909px;height:1.599999999999909px;background:#0aa8e6;"></div>
<div class="a " style="left:1286.2px;top:659.2px;width:1.599999999999909px;height:1.599999999999909px;background:#0aa8e6;"></div>
<div class="a " style="left:1277.2px;top:711.2px;width:1.599999999999909px;height:1.599999999999909px;background:#0aa8e6;"></div>
<div class="a " style="left:1277.2px;top:717.2px;width:1.599999999999909px;height:1.599999999999909px;background:#0aa8e6;"></div>
<div class="a " style="left:1277.2px;top:723.2px;width:1.599999999999909px;height:1.599999999999909px;background:#0aa8e6;"></div>
<div class="a " style="left:1277.2px;top:729.2px;width:1.599999999999909px;height:1.599999999999909px;background:#0aa8e6;"></div>
<div class="a " style="left:1277.2px;top:735.2px;width:1.599999999999909px;height:1.599999999999909px;background:#0aa8e6;"></div>
<div class="a " style="left:1276px;top:260px;width:150px;height:12px;background:#363636;border-radius:6px;"></div>
<div class="a " style="left:1276px;top:260px;width:75px;height:12px;background:repeating-linear-gradient(125deg,rgba(255,255,255,0) 0px,rgba(255,255,255,0) 14px,rgba(255,255,255,.05) 14px,rgba(255,255,255,.05) 28px),linear-gradient(#0aa2da 0%,#0886b6 24%,#05587a 55%,#032e42 85%,#02222e 100%);border:1px solid #0a86b4;border-radius:6px;"></div>
<div class="a " style="left:1276px;top:272px;width:150px;height:12px;background:#363636;border-radius:6px;"></div>
<div class="a " style="left:1351px;top:272px;width:75px;height:12px;background:repeating-linear-gradient(125deg,rgba(255,255,255,0) 0px,rgba(255,255,255,0) 14px,rgba(255,255,255,.05) 14px,rgba(255,255,255,.05) 28px),linear-gradient(#0aa2da 0%,#0886b6 24%,#05587a 55%,#032e42 85%,#02222e 100%);border:1px solid #0a86b4;border-radius:6px;"></div>
<div class="a " style="left:1307px;top:293px;width:12px;height:89px;background:#363636;border-radius:6px;"></div>
<div class="a " style="left:1307px;top:293px;width:12px;height:44px;background:repeating-linear-gradient(35deg,rgba(255,255,255,0) 0px,rgba(255,255,255,0) 14px,rgba(255,255,255,.05) 14px,rgba(255,255,255,.05) 28px),linear-gradient(90deg,#0aa2da 0%,#0886b6 24%,#05587a 55%,#032e42 85%,#021e2a 100%);border:1px solid #0a86b4;border-radius:6px;"></div>
<div class="a " style="left:1382px;top:293px;width:12px;height:89px;background:#363636;border-radius:6px;"></div>
<div class="a " style="left:1382px;top:338px;width:12px;height:44px;background:repeating-linear-gradient(35deg,rgba(255,255,255,0) 0px,rgba(255,255,255,0) 14px,rgba(255,255,255,.05) 14px,rgba(255,255,255,.05) 28px),linear-gradient(90deg,#0aa2da 0%,#0886b6 24%,#05587a 55%,#032e42 85%,#021e2a 100%);border:1px solid #0a86b4;border-radius:6px;"></div>
<div class="a " style="left:1280px;top:394.2px;width:142px;height:1.5px;background:#444;"></div>
<div class="a" style="left:1343px;top:387px;width:16px;height:16px;border-radius:50%;background:#0a84ff;"></div>
<div class="a " style="left:1280px;top:420px;width:142px;height:1.5px;background:#444;"></div>
<div class="a" style="left:1343px;top:412.8px;width:16px;height:16px;border-radius:50%;background:#0a84ff;"></div>
<div class="a " style="left:1312.3px;top:447px;width:1.2999999999999545px;height:101px;background:#404040;"></div>
<div class="a" style="left:1305px;top:489px;width:16px;height:16px;border-radius:50%;background:#0a84ff;"></div>
<div class="a " style="left:1387.3px;top:447px;width:1.2999999999999545px;height:101px;background:#404040;"></div>
<div class="a" style="left:1380px;top:490px;width:16px;height:16px;border-radius:50%;background:#0a84ff;"></div>
<div class="a " style="left:1278px;top:559px;width:12px;height:12px;background:#0ab4f2;border:1px solid #fff;border-radius:1px;"></div>
<svg class="a" style="left:1278px;top:558px;" width="13" height="13" viewBox="0 0 13 13"><path d="M3 6.5 L5.5 10 L11 3" fill="none" stroke="#000" stroke-width="2.2" stroke-linecap="round" stroke-linejoin="round"/></svg>
<div class="a t " style="left:1301px;top:558px;color:#fff;font-size:13px;">Move in harmony</div>
<div class="a t " style="left:1395.5px;width:300px;text-align:center;top:493.5px;color:#fff;font-size:13px;letter-spacing:.15px;">Label1</div>
<div class="a t " style="left:1395.5px;width:300px;text-align:center;top:507.5px;color:#fff;font-size:13px;letter-spacing:.15px;">Label2</div>
<div class="a t " style="left:1395.5px;width:300px;text-align:center;top:531.5px;color:#fff;font-size:13px;letter-spacing:.6px;">Tooltip</div>
<svg class="a" style="left:1539px;top:555.3px;" width="14" height="14" viewBox="0 0 14 14"><line x1="7.00" y1="4.84" x2="7.00" y2="1.00" stroke="#fff" stroke-opacity="0.25" stroke-width="2" stroke-linecap="butt"/><line x1="8.08" y1="5.13" x2="10.00" y2="1.80" stroke="#fff" stroke-opacity="0.32" stroke-width="2" stroke-linecap="butt"/><line x1="8.87" y1="5.92" x2="12.20" y2="4.00" stroke="#fff" stroke-opacity="0.40" stroke-width="2" stroke-linecap="butt"/><line x1="9.16" y1="7.00" x2="13.00" y2="7.00" stroke="#fff" stroke-opacity="0.47" stroke-width="2" stroke-linecap="butt"/><line x1="8.87" y1="8.08" x2="12.20" y2="10.00" stroke="#fff" stroke-opacity="0.55" stroke-width="2" stroke-linecap="butt"/><line x1="8.08" y1="8.87" x2="10.00" y2="12.20" stroke="#fff" stroke-opacity="0.62" stroke-width="2" stroke-linecap="butt"/><line x1="7.00" y1="9.16" x2="7.00" y2="13.00" stroke="#fff" stroke-opacity="0.70" stroke-width="2" stroke-linecap="butt"/><line x1="5.92" y1="8.87" x2="4.00" y2="12.20" stroke="#fff" stroke-opacity="0.78" stroke-width="2" stroke-linecap="butt"/><line x1="5.13" y1="8.08" x2="1.80" y2="10.00" stroke="#fff" stroke-opacity="0.85" stroke-width="2" stroke-linecap="butt"/><line x1="4.84" y1="7.00" x2="1.00" y2="7.00" stroke="#fff" stroke-opacity="0.93" stroke-width="2" stroke-linecap="butt"/><line x1="5.13" y1="5.92" x2="1.80" y2="4.00" stroke="#fff" stroke-opacity="1.00" stroke-width="2" stroke-linecap="butt"/><line x1="5.92" y1="5.13" x2="4.00" y2="1.80" stroke="#fff" stroke-opacity="0.18" stroke-width="2" stroke-linecap="butt"/></svg>
<div class="a " style="left:1446px;top:260px;width:200px;height:24px;background:linear-gradient(#0aa8ea 0%,#0a98d2 15%,#066a92 50%,#022a3c 82%,#000c12 100%);border-bottom:1.5px solid #f4f4f4;"></div>
<div class="a " style="left:1513px;top:260px;width:1.2000000000000455px;height:24px;background:#f4f4f4;"></div>
<div class="a t " style="left:1450px;top:264.7px;color:#fff;font-size:13px;">Column1</div>
<div class="a t " style="left:1518px;top:264.7px;color:#fff;font-size:13px;">Column2</div>
<div class="a t " style="left:1450px;top:286.7px;color:#fff;font-size:13px;">Cell1.1</div>
<div class="a t " style="left:1518px;top:286.7px;color:#fff;font-size:13px;">Cell1.2</div>
<div class="a t " style="left:1450px;top:308px;color:#fff;font-size:13px;">Cell2.1</div>
<div class="a t " style="left:1518px;top:308px;color:#fff;font-size:13px;">Cell2.2</div>
<div class="a t " style="left:1450px;top:328.8px;color:#fff;font-size:13px;">Cell3.1</div>
<div class="a t " style="left:1518px;top:328.8px;color:#fff;font-size:13px;">Cell3.2</div>
<svg class="a" style="left:900px;top:668px" width="760" height="112" viewBox="900 668 760 112"><defs><linearGradient id="tgd" x1="0" y1="0" x2="0" y2="1"><stop offset="0" stop-color="#0a9cd6"/><stop offset="0.45" stop-color="#0a6c94"/><stop offset="1" stop-color="#14202a"/></linearGradient><linearGradient id="tgu" x1="0" y1="1" x2="0" y2="0"><stop offset="0" stop-color="#0a9cd6"/><stop offset="0.45" stop-color="#0a6c94"/><stop offset="1" stop-color="#14202a"/></linearGradient><linearGradient id="tgr" x1="0" y1="0" x2="1" y2="0"><stop offset="0" stop-color="#0ab2f0"/><stop offset="0.5" stop-color="#0a7098"/><stop offset="1" stop-color="#2a2a2a"/></linearGradient><linearGradient id="tgl" x1="1" y1="0" x2="0" y2="0"><stop offset="0" stop-color="#0ab2f0"/><stop offset="0.5" stop-color="#0a7098"/><stop offset="1" stop-color="#2a2a2a"/></linearGradient></defs><path d="M968.5 700.5 L966 680.5 Q966 679.5 967 679.5 L1020.5 679.5 L1024 700.5Z" fill="url(#tgd)" stroke="#0ab2f0" stroke-width="1"/><path d="M1025.5 700.5 L1022.5 680.5 Q1022.5 679.5 1023.5 679.5 L1077.5 679.5 Q1078.5 679.5 1078.8 680.5 L1082 700.5Z" fill="url(#tgd)" stroke="#0ab2f0" stroke-width="1"/><path d="M904.8 773.3 V697 L908 680 Q908.5 678.3 910.5 678.3 L963 678.3 Q965 678.3 965.3 680 L968.3 700.5 L1082.7 700.5 V773.3Z" fill="#000" stroke="#0ab2f0" stroke-width="1"/><path d="M908.5 678.6 H965" stroke="#0ab2f0" stroke-width="2.2"/><path d="M1150 746.5 L1146.5 767.6 Q1146.5 769.4 1148 769.4 L1200.5 769.4 Q1202 769.4 1202.3 767.6 L1206 746.5Z" fill="url(#tgu)" stroke="#0ab2f0" stroke-width="1"/><path d="M1207.5 746.5 L1204 767.6 Q1204 769.4 1205.5 769.4 L1257.5 769.4 Q1259.5 769.4 1259.8 767.6 L1264 746.5Z" fill="url(#tgu)" stroke="#0ab2f0" stroke-width="1"/><path d="M1086.5 673.5 H1264.7 V746.5 L1150.5 746.5 L1147 767.6 Q1146.7 769.4 1145 769.4 L1092.5 769.4 Q1090.7 769.4 1090.3 767.6 L1086.5 746.5Z" fill="#000" stroke="#0ab2f0" stroke-width="1"/><path d="M1091.5 769.1 H1146" stroke="#0ab2f0" stroke-width="2.2"/><rect x="1298.5" y="711.5" width="45.5" height="31" fill="url(#tgr)" stroke="#0ab2f0" stroke-width="1"/><rect x="1298.5" y="742.5" width="45.5" height="30.8" fill="url(#tgr)" stroke="#0ab2f0" stroke-width="1"/><path d="M1292 673.5 H1467 V773.3 H1344 V711.5 H1292" fill="none" stroke="#0ab2f0" stroke-width="1"/><rect x="1290" y="673" width="4.2" height="39" fill="#0ab2f0"/><rect x="1592.5" y="711.5" width="45.5" height="31" fill="url(#tgl)" stroke="#0ab2f0" stroke-width="1"/><rect x="1592.5" y="742.5" width="45.5" height="30.8" fill="url(#tgl)" stroke="#0ab2f0" stroke-width="1"/><path d="M1644 673.5 H1470.5 V773.3 H1592.5 V711.5 H1644" fill="none" stroke="#0ab2f0" stroke-width="1"/><rect x="1641.8" y="673" width="4.2" height="39" fill="#0ab2f0"/></svg>
<div class="a t " style="left:786px;width:300px;text-align:center;top:681px;color:#fff;font-size:13px;">tab1</div>
<div class="a t " style="left:843px;width:300px;text-align:center;top:680.5px;color:#fff;font-size:13px;">tab2</div>
<div class="a t " style="left:900px;width:300px;text-align:center;top:680.5px;color:#fff;font-size:13px;">tab3</div>
<div class="a t " style="left:968px;width:300px;text-align:center;top:748.8px;color:#fff;font-size:13px;">tab1</div>
<div class="a t " style="left:1025px;width:300px;text-align:center;top:748.8px;color:#fff;font-size:13px;">tab2</div>
<div class="a t " style="left:1082px;width:300px;text-align:center;top:748.8px;color:#fff;font-size:13px;">tab3</div>
<div class="a t " style="left:1303px;top:686.5px;color:#fff;font-size:13px;">tab1</div>
<div class="a t " style="left:1303px;top:716.5px;color:#fff;font-size:13px;">tab2</div>
<div class="a t " style="left:1303px;top:747px;color:#fff;font-size:13px;">tab3</div>
<div class="a t " style="left:1595px;top:686.5px;color:#fff;font-size:13px;">tab1</div>
<div class="a t " style="left:1595px;top:716.5px;color:#fff;font-size:13px;">tab2</div>
<div class="a t " style="left:1595px;top:747px;color:#fff;font-size:13px;">tab3</div>
<div class="a " style="left:1650.8px;top:790.8px;width:2.400000000000091px;height:2.400000000000091px;background:#0aa8e6;border-radius:50%;"></div>
<div class="a " style="left:1647.8px;top:793.8px;width:2.400000000000091px;height:2.400000000000091px;background:#0aa8e6;border-radius:50%;"></div>
<div class="a " style="left:1650.8px;top:793.8px;width:2.400000000000091px;height:2.400000000000091px;background:#0aa8e6;border-radius:50%;"></div>
<div class="a " style="left:1644.8px;top:796.8px;width:2.400000000000091px;height:2.400000000000091px;background:#0aa8e6;border-radius:50%;"></div>
<div class="a " style="left:1647.8px;top:796.8px;width:2.400000000000091px;height:2.400000000000091px;background:#0aa8e6;border-radius:50%;"></div>
<div class="a " style="left:1650.8px;top:796.8px;width:2.400000000000091px;height:2.400000000000091px;background:#0aa8e6;border-radius:50%;"></div>
<svg class="a" style="left:783.4px;top:471.4px;" width="108" height="108" viewBox="0 0 1 1"><path d="M0.5,0 L0.38,0.283 C0.42,0.33 0.46,0.37 0.50,0.393 C0.45,0.372 0.40,0.348 0.357,0.3185 L0,1 Q0.19,0.88 0.385,0.836 C0.36,0.70 0.42,0.582 0.5,0.582 C0.58,0.582 0.64,0.70 0.609,0.836 Q0.81,0.88 1,1 L0.913,0.839 C0.87,0.79 0.81,0.75 0.753,0.73 C0.80,0.74 0.84,0.755 0.879,0.777Z" fill="#000"/></svg>
<svg class="a" style="left:1463px;top:2.7px;" width="16" height="16" viewBox="0 0 16 16"><circle cx="8" cy="8" r="2.7" fill="#f2f2f2"/><line x1="11.90" y1="8.00" x2="13.60" y2="8.00" stroke="#f2f2f2" stroke-width="1.7" stroke-linecap="round"/><line x1="10.76" y1="10.76" x2="11.96" y2="11.96" stroke="#f2f2f2" stroke-width="1.7" stroke-linecap="round"/><line x1="8.00" y1="11.90" x2="8.00" y2="13.60" stroke="#f2f2f2" stroke-width="1.7" stroke-linecap="round"/><line x1="5.24" y1="10.76" x2="4.04" y2="11.96" stroke="#f2f2f2" stroke-width="1.7" stroke-linecap="round"/><line x1="4.10" y1="8.00" x2="2.40" y2="8.00" stroke="#f2f2f2" stroke-width="1.7" stroke-linecap="round"/><line x1="5.24" y1="5.24" x2="4.04" y2="4.04" stroke="#f2f2f2" stroke-width="1.7" stroke-linecap="round"/><line x1="8.00" y1="4.10" x2="8.00" y2="2.40" stroke="#f2f2f2" stroke-width="1.7" stroke-linecap="round"/><line x1="10.76" y1="5.24" x2="11.96" y2="4.04" stroke="#f2f2f2" stroke-width="1.7" stroke-linecap="round"/></svg>
<svg class="a" style="left:1502px;top:4px;" width="15" height="14" viewBox="0 0 15 14"><path d="M1.2 4.8 H4 L7.6 1.6 V12.4 L4 9.2 H1.2Z" fill="#f2f2f2"/><path d="M9 4.8 Q10.2 7 9 9.2" fill="none" stroke="#f2f2f2" stroke-width="1.1"/><path d="M10.6 3.2 Q12.6 7 10.6 10.8" fill="none" stroke="#d0d0d0" stroke-width="1.1"/><path d="M12.2 1.8 Q15 7 12.2 12.2" fill="none" stroke="#9a9a9a" stroke-width="1"/></svg>
<svg class="a" style="left:1542.5px;top:4.5px;" width="10" height="14" viewBox="0 0 10 14"><path d="M1.8 3.8 L7.4 9.2 L4.7 12 V1.2 L7.4 4 L1.8 9.4" fill="none" stroke="#f2f2f2" stroke-width="1.5" stroke-linejoin="round" stroke-linecap="round"/></svg>
<svg class="a" style="left:1578px;top:4.6px;" width="14" height="13" viewBox="0 0 14 13"><path d="M1.6 4.6 Q7 -0.4 12.4 4.6" fill="none" stroke="#f2f2f2" stroke-width="1.4" stroke-linecap="round"/><path d="M3.4 6.8 Q7 3.4 10.6 6.8" fill="none" stroke="#f2f2f2" stroke-width="1.4" stroke-linecap="round"/><path d="M5.2 8.9 Q7 7.2 8.8 8.9" fill="none" stroke="#f2f2f2" stroke-width="1.4" stroke-linecap="round"/><circle cx="7" cy="10.9" r="1.1" fill="#f2f2f2"/></svg>
<svg class="a" style="left:1616.5px;top:6.6px;" width="14" height="9" viewBox="0 0 14 9"><rect x="0.8" y="0.8" width="10.6" height="6.6" rx="1.2" fill="#2db52d" stroke="#f2f2f2" stroke-width="1.2"/><rect x="12" y="2.7" width="1.3" height="2.8" fill="#f2f2f2"/></svg>
<svg class="a" style="left:1654px;top:4px;" width="15" height="14" viewBox="0 0 15 14"><ellipse cx="7" cy="6" rx="6.1" ry="4.9" fill="#f2f2f2"/><path d="M9 9.5 Q10.5 12 13 12.6 Q11.8 11 12 8.5Z" fill="#f2f2f2"/></svg>
<svg class="a" style="left:517.0px;top:1002px" width="32" height="32" viewBox="0 0 32 32"><defs><linearGradient id="pw" x1="0" y1="0" x2="0" y2="1"><stop offset="0" stop-color="#e83a3a"/><stop offset="1" stop-color="#b82424"/></linearGradient></defs><path d="M11.2 5.6 A11.2 11.2 0 1 0 20.8 5.6" fill="none" stroke="url(#pw)" stroke-width="3.6" stroke-linecap="butt"/><rect x="13.7" y="1.6" width="4.6" height="10" fill="#e23636"/></svg>
<svg class="a" style="left:517.0px;top:1037px;opacity:.9;-webkit-mask-image:linear-gradient(rgba(0,0,0,.38),rgba(0,0,0,0) 80%);mask-image:linear-gradient(rgba(0,0,0,.38),rgba(0,0,0,0) 80%);filter:blur(.6px);" width="32" height="14" viewBox="0 18 32 14"><g transform="translate(0,50) scale(1,-1)"><defs><linearGradient id="pw" x1="0" y1="0" x2="0" y2="1"><stop offset="0" stop-color="#e83a3a"/><stop offset="1" stop-color="#b82424"/></linearGradient></defs><path d="M11.2 5.6 A11.2 11.2 0 1 0 20.8 5.6" fill="none" stroke="url(#pw)" stroke-width="3.6" stroke-linecap="butt"/><rect x="13.7" y="1.6" width="4.6" height="10" fill="#e23636"/></g></svg>
<svg class="a" style="left:557.0px;top:1002px" width="32" height="32" viewBox="0 0 32 32"><rect x="1.6" y="1" width="28.8" height="29" rx="1.6" fill="#000"/></svg>
<svg class="a" style="left:557.0px;top:1037px;opacity:.9;-webkit-mask-image:linear-gradient(rgba(0,0,0,.38),rgba(0,0,0,0) 80%);mask-image:linear-gradient(rgba(0,0,0,.38),rgba(0,0,0,0) 80%);filter:blur(.6px);" width="32" height="14" viewBox="0 18 32 14"><g transform="translate(0,50) scale(1,-1)"><rect x="1.6" y="1" width="28.8" height="29" rx="1.6" fill="#000"/></g></svg>
<svg class="a" style="left:597.0px;top:1002px" width="32" height="32" viewBox="0 0 32 32"><rect x="2.6" y="4" width="27.8" height="23" rx="1.4" fill="none" stroke="#000" stroke-width="2.3"/><path d="M8.3 9.8 L15.5 12.6 L8.3 15.4" fill="none" stroke="#000" stroke-width="1.6"/><path d="M17.6 21.4 H26" stroke="#000" stroke-width="1.9"/></svg>
<svg class="a" style="left:597.0px;top:1037px;opacity:.9;-webkit-mask-image:linear-gradient(rgba(0,0,0,.38),rgba(0,0,0,0) 80%);mask-image:linear-gradient(rgba(0,0,0,.38),rgba(0,0,0,0) 80%);filter:blur(.6px);" width="32" height="14" viewBox="0 18 32 14"><g transform="translate(0,50) scale(1,-1)"><rect x="2.6" y="4" width="27.8" height="23" rx="1.4" fill="none" stroke="#000" stroke-width="2.3"/><path d="M8.3 9.8 L15.5 12.6 L8.3 15.4" fill="none" stroke="#000" stroke-width="1.6"/><path d="M17.6 21.4 H26" stroke="#000" stroke-width="1.9"/></g></svg>
<svg class="a" style="left:637.0px;top:1002px" width="32" height="32" viewBox="0 0 32 32"><circle cx="16.2" cy="15" r="15" fill="#000"/><path d="M16.2 10.5 H31 M20.1 17.25 L12.9 29.9 M12.3 17.25 L4.8 4.6" stroke="#0870b8" stroke-width="2"/><circle cx="16.2" cy="15" r="6.2" fill="#000" stroke="#0870b8" stroke-width="2.3"/></svg>
<svg class="a" style="left:637.0px;top:1037px;opacity:.9;-webkit-mask-image:linear-gradient(rgba(0,0,0,.38),rgba(0,0,0,0) 80%);mask-image:linear-gradient(rgba(0,0,0,.38),rgba(0,0,0,0) 80%);filter:blur(.6px);" width="32" height="14" viewBox="0 18 32 14"><g transform="translate(0,50) scale(1,-1)"><circle cx="16.2" cy="15" r="15" fill="#000"/><path d="M16.2 10.5 H31 M20.1 17.25 L12.9 29.9 M12.3 17.25 L4.8 4.6" stroke="#0870b8" stroke-width="2"/><circle cx="16.2" cy="15" r="6.2" fill="#000" stroke="#0870b8" stroke-width="2.3"/></g></svg>
<svg class="a" style="left:677.0px;top:1002px" width="32" height="32" viewBox="0 0 32 32"><path d="M6.4 4.2 L8.3 7.9 Q11 7.4 14.6 4.3 Q13.4 6.6 13.1 8.6 Q15 9.6 16.9 10.5 Q15.6 12.2 14.1 13.1 L13.6 15.5 L11.5 15.8 Q11.6 17.4 12.7 18.2 Q15.6 19 19.6 17.4 Q20 18 19.4 18.6 Q18 19.8 16.5 20.3 Q15 21.4 13.1 21.7 Q15 23.2 17.2 23 Q20 22.8 22 21 Q24 19 24.7 16.5 Q25.4 14.6 25.4 13.1 L24.1 12.4 L23.4 11.7 L25.1 11 Q25.2 9 24.7 7.6 Q24.2 5.8 23.2 4.5 Q25.4 5.4 27.1 6.9 Q29 8.8 29.9 11.7 Q30.8 14 30.7 16.5 Q30.6 19.4 29.5 22 Q28 25 25.4 27.1 Q22.4 29.6 18.6 30.1 Q15 30.4 11.7 28.9 Q8 27.2 5.5 24.4 Q3.6 21.8 3.1 18.6 Q2.8 15.6 3.1 12.7 Q3.4 10 4.5 7.9 Q5.4 5.8 6.4 4.2Z" fill="#000"/></svg>
<svg class="a" style="left:677.0px;top:1037px;opacity:.9;-webkit-mask-image:linear-gradient(rgba(0,0,0,.38),rgba(0,0,0,0) 80%);mask-image:linear-gradient(rgba(0,0,0,.38),rgba(0,0,0,0) 80%);filter:blur(.6px);" width="32" height="14" viewBox="0 18 32 14"><g transform="translate(0,50) scale(1,-1)"><path d="M6.4 4.2 L8.3 7.9 Q11 7.4 14.6 4.3 Q13.4 6.6 13.1 8.6 Q15 9.6 16.9 10.5 Q15.6 12.2 14.1 13.1 L13.6 15.5 L11.5 15.8 Q11.6 17.4 12.7 18.2 Q15.6 19 19.6 17.4 Q20 18 19.4 18.6 Q18 19.8 16.5 20.3 Q15 21.4 13.1 21.7 Q15 23.2 17.2 23 Q20 22.8 22 21 Q24 19 24.7 16.5 Q25.4 14.6 25.4 13.1 L24.1 12.4 L23.4 11.7 L25.1 11 Q25.2 9 24.7 7.6 Q24.2 5.8 23.2 4.5 Q25.4 5.4 27.1 6.9 Q29 8.8 29.9 11.7 Q30.8 14 30.7 16.5 Q30.6 19.4 29.5 22 Q28 25 25.4 27.1 Q22.4 29.6 18.6 30.1 Q15 30.4 11.7 28.9 Q8 27.2 5.5 24.4 Q3.6 21.8 3.1 18.6 Q2.8 15.6 3.1 12.7 Q3.4 10 4.5 7.9 Q5.4 5.8 6.4 4.2Z" fill="#000"/></g></svg>
<svg class="a" style="left:717.0px;top:1002px" width="32" height="32" viewBox="0 0 32 32"><path d="M3.6 5.8 H28.4 L16 15.4Z" fill="#000"/><path d="M1.4 8.4 Q1.4 7 2.4 7.4 L16 18 L29.6 7.4 Q30.6 7 30.6 8.4 V24 Q30.6 26.2 28.4 26.2 H3.6 Q1.4 26.2 1.4 24Z" fill="#000"/></svg>
<svg class="a" style="left:717.0px;top:1037px;opacity:.9;-webkit-mask-image:linear-gradient(rgba(0,0,0,.38),rgba(0,0,0,0) 80%);mask-image:linear-gradient(rgba(0,0,0,.38),rgba(0,0,0,0) 80%);filter:blur(.6px);" width="32" height="14" viewBox="0 18 32 14"><g transform="translate(0,50) scale(1,-1)"><path d="M3.6 5.8 H28.4 L16 15.4Z" fill="#000"/><path d="M1.4 8.4 Q1.4 7 2.4 7.4 L16 18 L29.6 7.4 Q30.6 7 30.6 8.4 V24 Q30.6 26.2 28.4 26.2 H3.6 Q1.4 26.2 1.4 24Z" fill="#000"/></g></svg>
<svg class="a" style="left:757.0px;top:1002px" width="32" height="32" viewBox="0 0 32 32"><rect x="2.8" y="4" width="24.6" height="17.6" rx="1" fill="none" stroke="#000" stroke-width="2"/><rect x="7.6" y="8.4" width="23" height="16" rx="1" fill="none" stroke="#000" stroke-width="2.2"/><rect x="17.4" y="24.4" width="2.6" height="4.4" fill="#000"/><rect x="12.6" y="28.2" width="12.4" height="1.7" fill="#000"/><rect x="8" y="21.4" width="6.2" height="2.2" fill="#000"/></svg>
<svg class="a" style="left:757.0px;top:1037px;opacity:.9;-webkit-mask-image:linear-gradient(rgba(0,0,0,.38),rgba(0,0,0,0) 80%);mask-image:linear-gradient(rgba(0,0,0,.38),rgba(0,0,0,0) 80%);filter:blur(.6px);" width="32" height="14" viewBox="0 18 32 14"><g transform="translate(0,50) scale(1,-1)"><rect x="2.8" y="4" width="24.6" height="17.6" rx="1" fill="none" stroke="#000" stroke-width="2"/><rect x="7.6" y="8.4" width="23" height="16" rx="1" fill="none" stroke="#000" stroke-width="2.2"/><rect x="17.4" y="24.4" width="2.6" height="4.4" fill="#000"/><rect x="12.6" y="28.2" width="12.4" height="1.7" fill="#000"/><rect x="8" y="21.4" width="6.2" height="2.2" fill="#000"/></g></svg>
<svg class="a" style="left:797.0px;top:1002px" width="32" height="32" viewBox="0 0 32 32"><defs><linearGradient id="dc" x1="0" y1="0" x2="0" y2="1"><stop offset="0" stop-color="#fafafa"/><stop offset="1" stop-color="#c6c6c6"/></linearGradient></defs><path d="M4.6 0.6 H17.6 L28.8 11.6 V30.6 H4.6Z" fill="url(#dc)" stroke="#000" stroke-width="1.3" stroke-linejoin="round"/><path d="M21.8 0.2 H29.4 V7.6Z" fill="#000"/></svg>
<svg class="a" style="left:797.0px;top:1037px;opacity:.9;-webkit-mask-image:linear-gradient(rgba(0,0,0,.38),rgba(0,0,0,0) 80%);mask-image:linear-gradient(rgba(0,0,0,.38),rgba(0,0,0,0) 80%);filter:blur(.6px);" width="32" height="14" viewBox="0 18 32 14"><g transform="translate(0,50) scale(1,-1)"><defs><linearGradient id="dc" x1="0" y1="0" x2="0" y2="1"><stop offset="0" stop-color="#fafafa"/><stop offset="1" stop-color="#c6c6c6"/></linearGradient></defs><path d="M4.6 0.6 H17.6 L28.8 11.6 V30.6 H4.6Z" fill="url(#dc)" stroke="#000" stroke-width="1.3" stroke-linejoin="round"/><path d="M21.8 0.2 H29.4 V7.6Z" fill="#000"/></g></svg>
<svg class="a" style="left:837.0px;top:1002px" width="32" height="32" viewBox="0 0 32 32"><path d="M1.6 28.6 L16.2 15.4 L21 20 C17.6 21.6 15.6 23 14.4 25.4 Q8 26.4 1.6 28.6Z" fill="#000"/><path d="M18.2 12.4 L25.4 2.6 Q27.6 0.2 30.6 2 Q33.4 4.4 31.4 7.4 L24.2 17.8Z" fill="#000"/><path d="M16.6 14.6 L18.6 12.4 L24 17.6 L22 19.8Z" fill="#000"/><circle cx="19.6" cy="14" r="2" fill="#2a8fd0"/></svg>
<svg class="a" style="left:837.0px;top:1037px;opacity:.9;-webkit-mask-image:linear-gradient(rgba(0,0,0,.38),rgba(0,0,0,0) 80%);mask-image:linear-gradient(rgba(0,0,0,.38),rgba(0,0,0,0) 80%);filter:blur(.6px);" width="32" height="14" viewBox="0 18 32 14"><g transform="translate(0,50) scale(1,-1)"><path d="M1.6 28.6 L16.2 15.4 L21 20 C17.6 21.6 15.6 23 14.4 25.4 Q8 26.4 1.6 28.6Z" fill="#000"/><path d="M18.2 12.4 L25.4 2.6 Q27.6 0.2 30.6 2 Q33.4 4.4 31.4 7.4 L24.2 17.8Z" fill="#000"/><path d="M16.6 14.6 L18.6 12.4 L24 17.6 L22 19.8Z" fill="#000"/><circle cx="19.6" cy="14" r="2" fill="#2a8fd0"/></g></svg>
<svg class="a" style="left:877.0px;top:1002px" width="32" height="32" viewBox="0 0 32 32"><rect x="5" y="3.6" width="23" height="24" rx="1.6" fill="#000"/><rect x="8" y="7" width="17" height="3.8" fill="#0870b8"/><circle cx="10" cy="16.4" r="1.9" fill="#0870b8"/><circle cx="16.5" cy="16.4" r="1.9" fill="#0870b8"/><circle cx="23" cy="16.4" r="1.9" fill="#0870b8"/><circle cx="10" cy="22" r="1.9" fill="#0870b8"/><circle cx="16.5" cy="22" r="1.9" fill="#0870b8"/><circle cx="23" cy="22" r="1.9" fill="#0870b8"/></svg>
<svg class="a" style="left:877.0px;top:1037px;opacity:.9;-webkit-mask-image:linear-gradient(rgba(0,0,0,.38),rgba(0,0,0,0) 80%);mask-image:linear-gradient(rgba(0,0,0,.38),rgba(0,0,0,0) 80%);filter:blur(.6px);" width="32" height="14" viewBox="0 18 32 14"><g transform="translate(0,50) scale(1,-1)"><rect x="5" y="3.6" width="23" height="24" rx="1.6" fill="#000"/><rect x="8" y="7" width="17" height="3.8" fill="#0870b8"/><circle cx="10" cy="16.4" r="1.9" fill="#0870b8"/><circle cx="16.5" cy="16.4" r="1.9" fill="#0870b8"/><circle cx="23" cy="16.4" r="1.9" fill="#0870b8"/><circle cx="10" cy="22" r="1.9" fill="#0870b8"/><circle cx="16.5" cy="22" r="1.9" fill="#0870b8"/><circle cx="23" cy="22" r="1.9" fill="#0870b8"/></g></svg>
<svg class="a" style="left:917.0px;top:1002px" width="32" height="32" viewBox="0 0 32 32"><path d="M5.2 24 V14.4 C5.2 6.6 10 1.2 16.8 1.2 C23.6 1.2 28.4 6.6 28.4 14.4 V24" fill="none" stroke="#000" stroke-width="2"/><path d="M9.6 17.4 V31 C5.8 30 3.8 27.4 3.8 24 C3.8 20.8 5.8 18.2 9.6 17.4Z M24 17.4 V31 C27.8 30 29.8 27.4 29.8 24 C29.8 20.8 27.8 18.2 24 17.4Z" fill="#000"/><path d="M11.2 17.6 V31 M22.4 17.6 V31" stroke="#000" stroke-width="0.9"/><path d="M11.4 25 H14 L15 23.4 L16 27 L17.6 20.4 L18.8 25 H22.2" fill="none" stroke="#000" stroke-width="0.9"/></svg>
<svg class="a" style="left:917.0px;top:1037px;opacity:.9;-webkit-mask-image:linear-gradient(rgba(0,0,0,.38),rgba(0,0,0,0) 80%);mask-image:linear-gradient(rgba(0,0,0,.38),rgba(0,0,0,0) 80%);filter:blur(.6px);" width="32" height="14" viewBox="0 18 32 14"><g transform="translate(0,50) scale(1,-1)"><path d="M5.2 24 V14.4 C5.2 6.6 10 1.2 16.8 1.2 C23.6 1.2 28.4 6.6 28.4 14.4 V24" fill="none" stroke="#000" stroke-width="2"/><path d="M9.6 17.4 V31 C5.8 30 3.8 27.4 3.8 24 C3.8 20.8 5.8 18.2 9.6 17.4Z M24 17.4 V31 C27.8 30 29.8 27.4 29.8 24 C29.8 20.8 27.8 18.2 24 17.4Z" fill="#000"/><path d="M11.2 17.6 V31 M22.4 17.6 V31" stroke="#000" stroke-width="0.9"/><path d="M11.4 25 H14 L15 23.4 L16 27 L17.6 20.4 L18.8 25 H22.2" fill="none" stroke="#000" stroke-width="0.9"/></g></svg>
<svg class="a" style="left:957.0px;top:1002px" width="32" height="32" viewBox="0 0 32 32"><path d="M4.4 20 H11 L14.2 2.8 L18 30.6 L21.4 12 L24.6 20 H29.4" fill="none" stroke="#000" stroke-width="2.9" stroke-linejoin="miter" stroke-linecap="round"/></svg>
<svg class="a" style="left:957.0px;top:1037px;opacity:.9;-webkit-mask-image:linear-gradient(rgba(0,0,0,.38),rgba(0,0,0,0) 80%);mask-image:linear-gradient(rgba(0,0,0,.38),rgba(0,0,0,0) 80%);filter:blur(.6px);" width="32" height="14" viewBox="0 18 32 14"><g transform="translate(0,50) scale(1,-1)"><path d="M4.4 20 H11 L14.2 2.8 L18 30.6 L21.4 12 L24.6 20 H29.4" fill="none" stroke="#000" stroke-width="2.9" stroke-linejoin="miter" stroke-linecap="round"/></g></svg>
<svg class="a" style="left:997.0px;top:1002px" width="32" height="32" viewBox="0 0 32 32"><rect x="2.6" y="3.2" width="28" height="21.4" rx="1.4" fill="none" stroke="#000" stroke-width="2.3"/><rect x="15" y="24.6" width="3" height="3.6" fill="#000"/><rect x="9.4" y="27.6" width="14.4" height="1.8" fill="#000"/></svg>
<svg class="a" style="left:997.0px;top:1037px;opacity:.9;-webkit-mask-image:linear-gradient(rgba(0,0,0,.38),rgba(0,0,0,0) 80%);mask-image:linear-gradient(rgba(0,0,0,.38),rgba(0,0,0,0) 80%);filter:blur(.6px);" width="32" height="14" viewBox="0 18 32 14"><g transform="translate(0,50) scale(1,-1)"><rect x="2.6" y="3.2" width="28" height="21.4" rx="1.4" fill="none" stroke="#000" stroke-width="2.3"/><rect x="15" y="24.6" width="3" height="3.6" fill="#000"/><rect x="9.4" y="27.6" width="14.4" height="1.8" fill="#000"/></g></svg>
<svg class="a" style="left:1037.0px;top:1002px" width="34" height="32" viewBox="0 0 34 32"><circle cx="16.8" cy="14.4" r="11.2" fill="none" stroke="#fff" stroke-width="0.9"/><circle cx="3.46" cy="19.26" r="1.25" fill="#111"/><circle cx="3.46" cy="19.26" r="1.7" fill="none" stroke="rgba(255,255,255,.35)" stroke-width=".5"/><circle cx="2.61" cy="13.90" r="1.25" fill="#111"/><circle cx="2.61" cy="13.90" r="1.7" fill="none" stroke="rgba(255,255,255,.35)" stroke-width=".5"/><circle cx="3.83" cy="8.62" r="1.25" fill="#111"/><circle cx="3.83" cy="8.62" r="1.7" fill="none" stroke="rgba(255,255,255,.35)" stroke-width=".5"/><circle cx="6.94" cy="4.19" r="1.25" fill="#111"/><circle cx="6.94" cy="4.19" r="1.7" fill="none" stroke="rgba(255,255,255,.35)" stroke-width=".5"/><circle cx="11.48" cy="1.23" r="1.25" fill="#111"/><circle cx="11.48" cy="1.23" r="1.7" fill="none" stroke="rgba(255,255,255,.35)" stroke-width=".5"/><circle cx="16.80" cy="0.20" r="1.25" fill="#111"/><circle cx="16.80" cy="0.20" r="1.7" fill="none" stroke="rgba(255,255,255,.35)" stroke-width=".5"/><circle cx="22.12" cy="1.23" r="1.25" fill="#111"/><circle cx="22.12" cy="1.23" r="1.7" fill="none" stroke="rgba(255,255,255,.35)" stroke-width=".5"/><circle cx="26.66" cy="4.19" r="1.25" fill="#111"/><circle cx="26.66" cy="4.19" r="1.7" fill="none" stroke="rgba(255,255,255,.35)" stroke-width=".5"/><circle cx="29.77" cy="8.62" r="1.25" fill="#111"/><circle cx="29.77" cy="8.62" r="1.7" fill="none" stroke="rgba(255,255,255,.35)" stroke-width=".5"/><circle cx="30.99" cy="13.90" r="1.25" fill="#111"/><circle cx="30.99" cy="13.90" r="1.7" fill="none" stroke="rgba(255,255,255,.35)" stroke-width=".5"/><circle cx="30.14" cy="19.26" r="1.25" fill="#111"/><circle cx="30.14" cy="19.26" r="1.7" fill="none" stroke="rgba(255,255,255,.35)" stroke-width=".5"/></svg>
<svg class="a" style="left:1037.0px;top:1037px;opacity:.9;-webkit-mask-image:linear-gradient(rgba(0,0,0,.38),rgba(0,0,0,0) 80%);mask-image:linear-gradient(rgba(0,0,0,.38),rgba(0,0,0,0) 80%);filter:blur(.6px);" width="34" height="14" viewBox="0 18 34 14"><g transform="translate(0,50) scale(1,-1)"><circle cx="16.8" cy="14.4" r="11.2" fill="none" stroke="#fff" stroke-width="0.9"/><circle cx="3.46" cy="19.26" r="1.25" fill="#111"/><circle cx="3.46" cy="19.26" r="1.7" fill="none" stroke="rgba(255,255,255,.35)" stroke-width=".5"/><circle cx="2.61" cy="13.90" r="1.25" fill="#111"/><circle cx="2.61" cy="13.90" r="1.7" fill="none" stroke="rgba(255,255,255,.35)" stroke-width=".5"/><circle cx="3.83" cy="8.62" r="1.25" fill="#111"/><circle cx="3.83" cy="8.62" r="1.7" fill="none" stroke="rgba(255,255,255,.35)" stroke-width=".5"/><circle cx="6.94" cy="4.19" r="1.25" fill="#111"/><circle cx="6.94" cy="4.19" r="1.7" fill="none" stroke="rgba(255,255,255,.35)" stroke-width=".5"/><circle cx="11.48" cy="1.23" r="1.25" fill="#111"/><circle cx="11.48" cy="1.23" r="1.7" fill="none" stroke="rgba(255,255,255,.35)" stroke-width=".5"/><circle cx="16.80" cy="0.20" r="1.25" fill="#111"/><circle cx="16.80" cy="0.20" r="1.7" fill="none" stroke="rgba(255,255,255,.35)" stroke-width=".5"/><circle cx="22.12" cy="1.23" r="1.25" fill="#111"/><circle cx="22.12" cy="1.23" r="1.7" fill="none" stroke="rgba(255,255,255,.35)" stroke-width=".5"/><circle cx="26.66" cy="4.19" r="1.25" fill="#111"/><circle cx="26.66" cy="4.19" r="1.7" fill="none" stroke="rgba(255,255,255,.35)" stroke-width=".5"/><circle cx="29.77" cy="8.62" r="1.25" fill="#111"/><circle cx="29.77" cy="8.62" r="1.7" fill="none" stroke="rgba(255,255,255,.35)" stroke-width=".5"/><circle cx="30.99" cy="13.90" r="1.25" fill="#111"/><circle cx="30.99" cy="13.90" r="1.7" fill="none" stroke="rgba(255,255,255,.35)" stroke-width=".5"/><circle cx="30.14" cy="19.26" r="1.25" fill="#111"/><circle cx="30.14" cy="19.26" r="1.7" fill="none" stroke="rgba(255,255,255,.35)" stroke-width=".5"/></g></svg>
<div class="a " style="left:1037px;top:1020px;width:33px;height:15px;background:rgba(6,40,84,.82);border-radius:3px;"></div>
<div class="a t " style="left:903.5px;width:300px;text-align:center;top:1020.5px;color:#fff;font-size:12px;font-weight:bold;letter-spacing:1.1px;text-shadow:0 0 1px #000,0 0 2px #000;">67°F</div>
<div class="a " style="left:1070px;top:1022px;width:4px;height:2px;background:#8a9cac;"></div>
<div class="a " style="left:1071px;top:1027px;width:7px;height:2px;background:#8a9cac;"></div>
<div class="a " style="left:1073px;top:1032px;width:9px;height:2px;background:#8a9cac;"></div>
<div class="a " style="left:1079px;top:1039px;width:9px;height:2px;background:#8a9cac;"></div>
<svg class="a" style="left:1089.0px;top:1002px" width="32" height="32" viewBox="0 0 32 32"><defs><linearGradient id="qb" x1="0" y1="0" x2="0" y2="1"><stop offset="0" stop-color="#c6c6c6"/><stop offset="1" stop-color="#8c8c8c"/></linearGradient></defs><rect x="1.4" y="2" width="29.2" height="28.6" rx="1.2" fill="url(#qb)" stroke="#8a8a8a" stroke-width=".6"/><path d="M11 11 C11.4 7.8 13.6 6.6 16.2 6.6 C19.2 6.6 21.2 8.4 21.2 10.8 C21.2 14.6 16.4 15.4 16.2 20.4" fill="none" stroke="#989898" stroke-width="2.3"/><circle cx="16.2" cy="24.4" r="1.6" fill="#8e8e8e"/></svg>
<svg class="a" style="left:1089.0px;top:1037px;opacity:.9;-webkit-mask-image:linear-gradient(rgba(0,0,0,.38),rgba(0,0,0,0) 80%);mask-image:linear-gradient(rgba(0,0,0,.38),rgba(0,0,0,0) 80%);filter:blur(.6px);" width="32" height="14" viewBox="0 18 32 14"><g transform="translate(0,50) scale(1,-1)"><defs><linearGradient id="qb" x1="0" y1="0" x2="0" y2="1"><stop offset="0" stop-color="#c6c6c6"/><stop offset="1" stop-color="#8c8c8c"/></linearGradient></defs><rect x="1.4" y="2" width="29.2" height="28.6" rx="1.2" fill="url(#qb)" stroke="#8a8a8a" stroke-width=".6"/><path d="M11 11 C11.4 7.8 13.6 6.6 16.2 6.6 C19.2 6.6 21.2 8.4 21.2 10.8 C21.2 14.6 16.4 15.4 16.2 20.4" fill="none" stroke="#989898" stroke-width="2.3"/><circle cx="16.2" cy="24.4" r="1.6" fill="#8e8e8e"/></g></svg>
<svg class="a" style="left:1129.0px;top:1002px" width="32" height="32" viewBox="0 0 32 32"><defs><linearGradient id="qb" x1="0" y1="0" x2="0" y2="1"><stop offset="0" stop-color="#c6c6c6"/><stop offset="1" stop-color="#8c8c8c"/></linearGradient></defs><rect x="1.4" y="2" width="29.2" height="28.6" rx="1.2" fill="url(#qb)" stroke="#8a8a8a" stroke-width=".6"/><path d="M11 11 C11.4 7.8 13.6 6.6 16.2 6.6 C19.2 6.6 21.2 8.4 21.2 10.8 C21.2 14.6 16.4 15.4 16.2 20.4" fill="none" stroke="#989898" stroke-width="2.3"/><circle cx="16.2" cy="24.4" r="1.6" fill="#8e8e8e"/></svg>
<svg class="a" style="left:1129.0px;top:1037px;opacity:.9;-webkit-mask-image:linear-gradient(rgba(0,0,0,.38),rgba(0,0,0,0) 80%);mask-image:linear-gradient(rgba(0,0,0,.38),rgba(0,0,0,0) 80%);filter:blur(.6px);" width="32" height="14" viewBox="0 18 32 14"><g transform="translate(0,50) scale(1,-1)"><defs><linearGradient id="qb" x1="0" y1="0" x2="0" y2="1"><stop offset="0" stop-color="#c6c6c6"/><stop offset="1" stop-color="#8c8c8c"/></linearGradient></defs><rect x="1.4" y="2" width="29.2" height="28.6" rx="1.2" fill="url(#qb)" stroke="#8a8a8a" stroke-width=".6"/><path d="M11 11 C11.4 7.8 13.6 6.6 16.2 6.6 C19.2 6.6 21.2 8.4 21.2 10.8 C21.2 14.6 16.4 15.4 16.2 20.4" fill="none" stroke="#989898" stroke-width="2.3"/><circle cx="16.2" cy="24.4" r="1.6" fill="#8e8e8e"/></g></svg>
<div class="a" style="left:649.9px;top:1045px;width:7.2px;height:3.6px;border-radius:50%;background:#fff;box-shadow:0 0 3px 1px rgba(190,230,255,.7);"></div>
<div class="a" style="left:1101.9px;top:1045px;width:7.2px;height:3.6px;border-radius:50%;background:#fff;box-shadow:0 0 3px 1px rgba(190,230,255,.7);"></div>
<div class="a" style="left:1141.9px;top:1045px;width:7.2px;height:3.6px;border-radius:50%;background:#fff;box-shadow:0 0 3px 1px rgba(190,230,255,.7);"></div>
</body></html>
